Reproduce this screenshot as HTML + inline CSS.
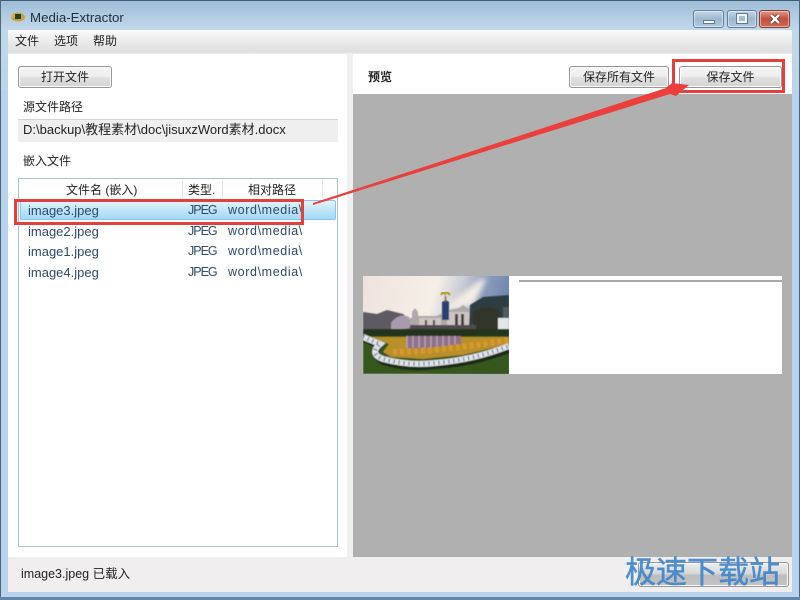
<!DOCTYPE html>
<html><head><meta charset="utf-8">
<style>
html,body{margin:0;padding:0;width:800px;height:600px;overflow:hidden;background:#b9d1ea}
body{position:relative;font-family:"Liberation Sans","Noto Sans CJK SC",sans-serif;font-size:12px;color:#222}
.a{position:absolute;white-space:nowrap}
.btn{position:absolute;box-sizing:border-box;border:1px solid #969696;border-radius:3px;background:linear-gradient(#f5f5f5 0%,#eeeeee 45%,#dfdfdf 55%,#d4d4d4 100%);box-shadow:inset 0 0 0 1px #fafafa;text-align:center;color:#222}
.row{position:absolute;left:28px;color:#2f4a66;font-size:13px;white-space:nowrap}
.j{font-size:12.5px;left:188px;letter-spacing:-1px}
.w{font-size:12.5px;left:228px;letter-spacing:.62px}
.box{position:absolute;box-sizing:border-box;border:3px solid #e2403f}
.wb{position:absolute;top:10px;height:18px;box-sizing:border-box;border:1px solid #5f7f9f;border-radius:3px;box-shadow:inset 0 0 0 1px rgba(255,255,255,.45)}
</style></head><body>
<div class="a" style="left:0;top:0;width:800px;height:90px;background:linear-gradient(#9dbdd8,#c3d8ea 30px,#bcd3e8)"></div>
<div class="a" style="left:0;top:0;width:800px;height:1px;background:#3f5f70"></div>
<div class="a" style="left:0;top:0;width:1px;height:600px;background:#4a6a80"></div>
<div class="a" style="right:0;top:0;width:1px;height:600px;background:#4a6a80"></div>
<div class="a" style="left:0;top:597px;width:800px;height:3px;background:#5f88a8"></div>

<svg class="a" style="left:10px;top:10px" width="16" height="14" viewBox="0 0 16 14"><ellipse cx="8" cy="7" rx="7" ry="4.5" fill="#c8a23a"/><rect x="5" y="4" width="6" height="5" fill="#27402a"/><circle cx="3" cy="6" r="2" fill="#e0b040"/></svg>
<div class="a" style="left:30px;top:10px;font-size:13.3px;color:#1e2f3e">Media-Extractor</div>

<div class="wb" style="left:693px;width:31px;background:linear-gradient(#c4d6e6,#9db8d0 50%,#b4cadc)"><div class="a" style="left:9px;top:9px;width:12px;height:4px;background:#f4f6f8;border:1px solid #62798e;box-sizing:border-box"></div></div>
<div class="wb" style="left:727px;width:30px;background:linear-gradient(#c4d6e6,#9db8d0 50%,#b4cadc)"><div class="a" style="left:9px;top:3px;width:10px;height:9px;border:2px solid #f4f6f8;outline:1px solid #62798e;box-sizing:border-box"></div></div>
<div class="wb" style="left:759px;width:31px;border-color:#8a3a30;background:linear-gradient(#dc9a8c,#c2503e 50%,#c96a55)"><svg class="a" style="left:9px;top:3px" width="12" height="10" viewBox="0 0 12 10"><path d="M2 1l8 8M10 1l-8 8" stroke="#5d2a22" stroke-width="4"/><path d="M2 1l8 8M10 1l-8 8" stroke="#fff" stroke-width="2.6"/></svg></div>

<div class="a" style="left:8px;top:30px;width:784px;height:562px;background:#fff"></div>
<div class="a" style="left:8px;top:30px;width:784px;height:24px;background:linear-gradient(#fafafa,#e9e9e9 55%,#dedede 90%,#efefef)"></div>
<div class="a" style="left:15px;top:32px;font-size:12px">文件</div>
<div class="a" style="left:54px;top:32px;font-size:12px">选项</div>
<div class="a" style="left:93px;top:32px;font-size:12px">帮助</div>

<div class="btn" style="left:18px;top:66px;width:94px;height:22px;line-height:20px">打开文件</div>
<div class="a" style="left:23px;top:98px">源文件路径</div>
<div class="a" style="left:18px;top:119px;width:320px;height:23px;background:#efefef;border-top:1px solid #d4d4d4;box-sizing:border-box"></div>
<div class="a" style="left:23px;top:122px;font-size:13px;line-height:16px">D:\backup\教程素材\doc\jisuxzWord素材.docx</div>
<div class="a" style="left:23px;top:152px">嵌入文件</div>

<div class="a" style="left:18px;top:178px;width:320px;height:369px;box-sizing:border-box;border:1px solid #a8c4d4;background:#fff"></div>
<div class="a" style="left:182px;top:180px;width:1px;height:18px;background:#e2e6ea"></div>
<div class="a" style="left:222px;top:180px;width:1px;height:18px;background:#e2e6ea"></div>
<div class="a" style="left:322px;top:180px;width:1px;height:18px;background:#e2e6ea"></div>
<div class="a" style="left:66px;top:181px">文件名 (嵌入)</div>
<div class="a" style="left:188px;top:181px">类型.</div>
<div class="a" style="left:248px;top:181px">相对路径</div>
<div class="a" style="left:20px;top:200px;width:316px;height:20px;box-sizing:border-box;border:1px solid #86c6e8;border-radius:2px;background:linear-gradient(#e6f4fc,#c4e6f9 45%,#a4d8f6)"></div>
<div class="row" style="top:203px">image3.jpeg</div><div class="row j" style="top:203px">JPEG</div><div class="row w" style="top:203px">word\media\</div>
<div class="row" style="top:224px">image2.jpeg</div><div class="row j" style="top:224px">JPEG</div><div class="row w" style="top:224px">word\media\</div>
<div class="row" style="top:244px">image1.jpeg</div><div class="row j" style="top:244px">JPEG</div><div class="row w" style="top:244px">word\media\</div>
<div class="row" style="top:265px">image4.jpeg</div><div class="row j" style="top:265px">JPEG</div><div class="row w" style="top:265px">word\media\</div>

<div class="a" style="left:347px;top:54px;width:6px;height:503px;background:#f0f0f0"></div>
<div class="a" style="left:368px;top:68px;font-weight:bold;color:#222">预览</div>
<div class="btn" style="left:569px;top:66px;width:100px;height:22px;line-height:21px">保存所有文件</div>
<div class="btn" style="left:679px;top:66px;width:103px;height:22px;line-height:21px">保存文件</div>
<div class="a" style="left:353px;top:94px;width:439px;height:463px;background:#b0b0b0"></div>
<div class="a" style="left:509px;top:276px;width:273px;height:98px;background:#fff"></div>
<div class="a" style="left:519px;top:280px;width:263px;height:2px;background:#a8a8a8"></div>

<svg class="a" style="left:363px;top:276px" width="146" height="98" viewBox="0 0 146 98">
<defs>
<linearGradient id="s" x1="0" y1="0" x2="1" y2="0.2"><stop offset="0" stop-color="#efe2de"/><stop offset=".5" stop-color="#f6efe6"/><stop offset=".68" stop-color="#c6c9d6"/><stop offset=".8" stop-color="#8e9fbe"/><stop offset="1" stop-color="#6f86ad"/></linearGradient>
<filter id="b" x="0" y="0" width="100%" height="100%"><feGaussianBlur stdDeviation=".6"/></filter>
<filter id="b2" x="-20%" y="-20%" width="140%" height="140%"><feGaussianBlur stdDeviation="3"/></filter>
<clipPath id="c"><rect width="146" height="98"/></clipPath>
</defs>
<g clip-path="url(#c)">
<rect width="146" height="98" fill="url(#s)"/>
<path d="M74 36Q92 24 116 4L124 2 110 30Z" fill="#f4ece4" filter="url(#b2)"/>
<g filter="url(#b)">
<path d="M0 36 14 38 24 34 40 38 47 44 50 54H0Z" fill="#5d5a64"/>
<path d="M28 47q8-11 18-6l4 11-22 2Z" fill="#a899ac"/>
<path d="M47 42h2V36l3-4 3 4v4h18l5-2h8v-4l10-2 4-3 4 3 5 2v26H47Z" fill="#b0a7a8"/>
<path d="M56 42h22v8H56ZM84 36h24v14H84Z" fill="#d8d2ce" opacity=".7"/>
<path d="M79 26l4-2 3 2v18h-7Z" fill="#2b3f72"/>
<path d="M82.5 26V20" stroke="#7a6a30" stroke-width="1.4"/>
<path d="M78 19l2-3 2 2 2-2 3 3" stroke="#b8951c" stroke-width="2" fill="none"/>
<path d="M92 38h3v12h-3ZM98 38h3v12h-3ZM62 44h2v6h-2ZM70 44h2v6h-2Z" fill="#484244"/>
<path d="M107 29 120 21 146 19V32H140V46H112L106 52Z" fill="#2f3d42"/>
<path d="M110 36q12-8 26-2v20h-26Z" fill="#33362a"/>
<rect x="135" y="42" width="11" height="15" fill="#e2e5e6"/>
<rect x="140" y="31" width="6" height="11" fill="#555a5a"/>
<rect x="47" y="49" width="66" height="5" fill="#514b50"/>
<rect y="53" width="146" height="8" fill="#22361c"/>
<rect y="60" width="146" height="38" fill="#34561f"/>
<path d="M8 61H146V68L100 79 60 83 28 81 20 76 26 68Z" fill="#b98f2c"/>
<path d="M44 60h54v8l-40 5-14-1Z" fill="#8f7089"/>
<path d="M44 60v12M50 60v12M56 60v12M62 60v12M68 60v11M74 60v10M80 60v10M86 60v9M92 60v8" stroke="#b9a0b2" stroke-width="1.5"/>
<path d="M30 76q40 0 116-12" fill="none" stroke="#d9982a" stroke-width="6" stroke-dasharray="4 3"/>
<path d="M0 64 17 71Q8 81 20 87 46 95 72 91 110 89 146 75" fill="none" stroke="#1d2b18" stroke-width="4"/>
<path d="M0 61 17 68Q6 78 20 83 46 90 72 87 110 84 146 70" fill="none" stroke="#dfe3ea" stroke-width="6"/>
<path d="M0 61 17 68Q6 78 20 83 46 90 72 87 110 84 146 70" fill="none" stroke="#59625e" stroke-width="4" stroke-dasharray="1 4"/>
</g></g>
</svg>

<div class="a" style="left:8px;top:557px;width:784px;height:35px;background:#f0eeee"></div>
<div class="a" style="left:21px;top:566px;font-size:12.5px;line-height:16px;color:#222">image3.jpeg 已载入</div>
<div class="btn" style="left:638px;top:562px;width:151px;height:25px;background:linear-gradient(#eeeeee,#d8d8d8 45%,#bcbcbc 55%,#c4c4c4)"></div>
<div class="a" style="left:625px;top:551px;font-size:31px;line-height:38px;color:#4086cc;opacity:.92;-webkit-text-stroke:.5px #4086cc;font-family:'Noto Sans CJK SC',sans-serif">极速下载站</div>

<div class="box" style="left:672px;top:59px;width:113px;height:34px"></div>
<div class="box" style="left:14px;top:199px;width:290px;height:26px"></div>
<svg class="a" style="left:0;top:0" width="800" height="600">
<path d="M313 203 L666 88 L672 83 L689 85 L676 96 L670 94 L313 205 Z" fill="#ea3f3b"/>
</svg>
</body></html>
